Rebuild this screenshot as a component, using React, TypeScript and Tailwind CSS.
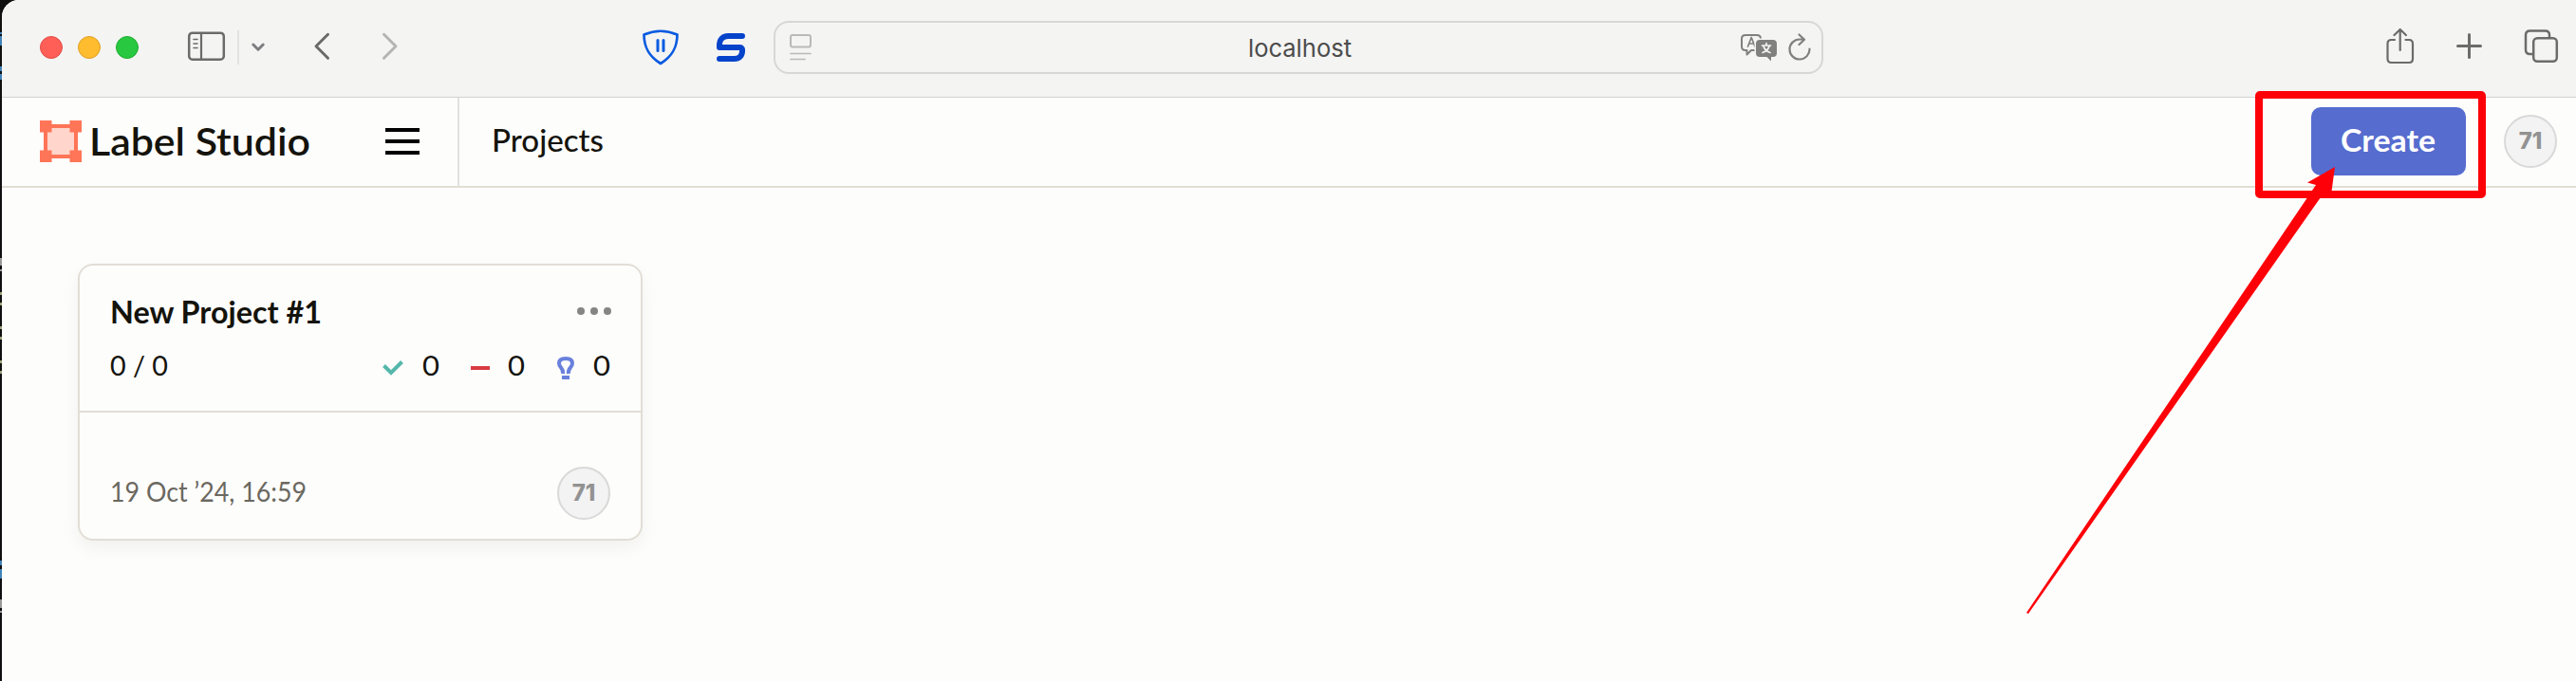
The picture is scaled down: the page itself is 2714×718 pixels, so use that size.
import React from 'react';

function Txt({ x, y, w, size, weight = 400, fill, family, children }: { x?: number; y: number; w: number; size: number; weight?: number; fill: string; family: string; children: string }) {
  return (
    <svg width={w} height={y + 14} className="block shrink-0 overflow-visible">
      <text x={x ?? 0} y={y} textLength={w} lengthAdjust="spacingAndGlyphs" fontSize={size} fontWeight={weight} fill={fill} fontFamily={family}>{children}</text>
    </svg>
  );
}

const LATO = 'Lato, sans-serif';
const INTER = 'Inter, sans-serif';

function Avatar() {
  return (
    <div className="flex h-14 w-14 shrink-0 items-center justify-center rounded-full border-2 border-[#d9d9d9] bg-[#f3f3f3] pb-[1px] font-['Inter'] text-[24px] leading-none font-extrabold text-[#929292]">
      71
    </div>
  );
}

function Toolbar() {
  return (
    <div className="flex h-[102px] shrink-0 bg-[#f4f4f3]">
      <div className="flex h-full w-[813px] shrink-0">
        <svg width="813" height="102" viewBox="2 0 813 102" fill="none" strokeLinecap="round" strokeLinejoin="round">
          <circle cx="54" cy="50" r="11.5" fill="#ff5f57" stroke="#e24b42" />
          <circle cx="94" cy="50" r="11.5" fill="#febc2e" stroke="#e0a028" />
          <circle cx="134" cy="50" r="11.5" fill="#28c840" stroke="#1fae30" />
          <rect x="199.2" y="34.7" width="36.6" height="28" rx="3.5" stroke="#6b6b6a" strokeWidth="2.5" />
          <path d="M212 35v28" stroke="#6b6b6a" strokeWidth="2.2" />
          <path d="M204 41.5h4M204 46h4M204 50.5h4" stroke="#6b6b6a" strokeWidth="1.6" />
          <path d="M251 32v36" stroke="#e2e2e1" strokeWidth="2" strokeLinecap="butt" />
          <path d="M266.800 47l5.200 5.200 5.200-5.200" stroke="#7d7d80" strokeWidth="3" />
          <path d="M345.500 36.300l-12.500 12.500 12.500 12.500" stroke="#6a6a6a" strokeWidth="3" />
          <path d="M404.500 36.300l12.500 12.500-12.500 12.500" stroke="#b4b4b4" strokeWidth="3" />
          <path d="M678.500 36.500q17.500-7.500 35 0c0 14-5.500 23-17.500 30.500c-12-7.500-17.500-16.500-17.500-30.500z" stroke="#0a5be0" strokeWidth="2.700" />
          <path d="M693 42.500v11M699 42.500v11" stroke="#0a5be0" strokeWidth="3" />
          <path d="M782 38h-15c-6 0-9 4.500-9 8.500v3.500h21.500q3 0 2.500 4c0 4.500-3 8-8.500 8h-15.500" stroke="#0543cb" strokeWidth="6" />
        </svg>
      </div>
      <div className="mt-[22px] flex h-14 w-[1106px] shrink-0 items-center justify-between rounded-2xl border-2 border-[#d7d7d5] pr-[11px] pl-[15px]">
        <svg width="24" height="28" fill="none" stroke="#b9b9b7" strokeWidth="2" strokeLinecap="round">
          <rect x="1" y="1" width="21" height="12.500" rx="2" />
          <path d="M1 20.500h21M1 26.500h15" strokeWidth="1.700" />
        </svg>
        <div className="ml-[50px] pt-[1px]">
          <Txt y={33} w={109} size={26} fill="#4c4c4c" family={INTER}>localhost</Txt>
        </div>
        <svg width="75" height="30" viewBox="1833 36 75 30" fill="none" stroke="#80807e" strokeWidth="2" strokeLinecap="round" strokeLinejoin="round">
          <path d="M1849 54h-4l-4.500 4.500v-4.500h-1.500q-4 0-4-4v-8q0-4 4-4h12q4 0 4 4v1" />
          <path d="M1841.500 50l3.700-9.500 3.700 9.500M1843 47h4.500" strokeWidth="1.700" />
          <path d="M1854 43h14q4 0 4 4v10q0 4-4 4h-2v4.500l-4.500-4.500h-7.500q-4 0-4-4v-10q0-4 4-4z" fill="#80807e" stroke="#f4f4f3" strokeWidth="3" paintOrder="stroke" />
          <path d="M1856.500 49h9M1861 46.500v2M1864 49.500q-1 5-7 7M1858 49.500q1 5 7 7" stroke="#f4f4f3" strokeWidth="1.700" />
          <path d="M1906.500 52.500a10.500 10.500 0 1 1-10.500-10h5M1895.500 37.500l5.500 5.200-5.500 5.300" strokeWidth="2.200" />
        </svg>
      </div>
      <svg className="ml-auto shrink-0" width="214" height="102" viewBox="2500 0 214 102" fill="none" stroke="#6b6b6a" strokeWidth="2.500" strokeLinecap="round" strokeLinejoin="round">
        <path d="M2523 42h-3.500q-4 0-4 4v16q0 4 4 4h18.500q4 0 4-4v-16q0-4-4-4h-3.500M2528.700 53v-21M2522.500 37l6.200-6 6.200 6" strokeWidth="2.200" />
        <path d="M2589.500 48.500h24M2601.500 36.500v24" strokeWidth="3" />
        <rect x="2669.200" y="40.200" width="24.600" height="24.600" rx="4" />
        <path d="M2668 57h-2.500q-4.500 0-4.500-4.500v-15.500q0-4.500 4.500-4.500h16q4.500 0 4.500 4.500v2" />
      </svg>
    </div>
  );
}

function Header() {
  return (
    <header className="flex h-24 shrink-0 items-center border-t border-b-2 border-t-[#d2d2d2] border-b-[#e1ded5] bg-[#fdfdfc]">
      <div className="flex h-full w-[482px] shrink-0 items-center border-r-2 border-[#e1e1e0] pb-[1px] pl-10">
        <svg width="44" height="44" className="shrink-0">
          <rect x="6" y="6" width="32" height="32" rx="2" fill="#ffd5cc" stroke="#ff7557" strokeWidth="4" />
          <path d="M0 0h12.500v12.500H0zM31.500 0H44v12.500H31.500zM0 31.500h12.500V44H0zM31.500 31.500H44V44H31.500z" fill="#ff7557" />
        </svg>
        <div className="ml-[8px] pt-[1px]">
          <Txt y={42} w={233} size={41} weight={600} fill="#14130c" family={LATO}>Label Studio</Txt>
        </div>
        <div className="ml-[79px] flex w-9 flex-col gap-2">
          <div className="h-1 bg-black" />
          <div className="h-1 bg-black" />
          <div className="h-1 bg-black" />
        </div>
      </div>
      <div className="ml-[34px]">
        <Txt y={34} w={118} size={32} weight={500} fill="#14130c" family={LATO}>Projects</Txt>
      </div>
      <div className="ml-auto flex items-center gap-10 pr-5 pb-[1px]">
        <div className="flex h-[72px] w-[163px] items-center justify-center rounded-[10px] bg-[#566ccf]">
          <Txt x={-1} y={35} w={100} size={32} weight={700} fill="#fff" family={LATO}>Create</Txt>
        </div>
        <Avatar />
      </div>
    </header>
  );
}

function ProjectCard() {
  return (
    <section className="mt-20 ml-20 flex h-[292px] w-[595px] flex-col rounded-2xl border-2 border-[#e1ded5] bg-[#fdfdfc] shadow-[0_8px_18px_rgba(0,0,0,0.05)]">
      <div className="flex h-[156px] flex-col border-b-2 border-[#e1ded5] pt-[31px] pr-[31px] pl-[31px]">
        <div className="flex items-start justify-between">
          <Txt x={1} y={30} w={223} size={31.500} weight={700} fill="#14130c" family={LATO}>New Project #1</Txt>
          <svg width="38" height="10" className="mt-[12px]" fill="#858584">
            <circle cx="6" cy="5" r="4" />
            <circle cx="20" cy="5" r="4" />
            <circle cx="34" cy="5" r="4" />
          </svg>
        </div>
        <div className="mt-[13px] flex items-start">
          <Txt x={1} y={28} w={61} size={28} fill="#14130c" family={LATO}>0 / 0</Txt>
          <svg width="24" height="28" viewBox="403 370 24 28" className="ml-[227px]"><path d="M404.500 387.500l7.500 7.500 11.500-11.500" fill="none" stroke="#55b7aa" strokeWidth="4" /></svg>
          <div className="ml-[19px]"><Txt x={-1} y={28} w={18} size={28} fill="#14130c" family={LATO}>0</Txt></div>
          <div className="mt-[18px] ml-[32px] h-1 w-5 bg-[#d93b40]" />
          <div className="ml-[19px]"><Txt y={28} w={18} size={28} fill="#14130c" family={LATO}>0</Txt></div>
          <svg width="20" height="34" viewBox="586 368 20 34" className="ml-[33px]"><path d="M593 394q.5-3.500-2-6.500-2-2.500-2-4.500 0-5 7-5t7 5q0 2-2 4.500-2.500 3-2 6.500" fill="none" stroke="#6980dc" strokeWidth="4" /><path d="M592 396h8v4h-8z" fill="#6980dc" /></svg>
          <div className="ml-[19px]"><Txt y={28} w={18} size={28} fill="#14130c" family={LATO}>0</Txt></div>
        </div>
      </div>
      <div className="flex h-[134px] items-end justify-between pr-[32px] pb-5 pl-[31px]">
        <div className="pb-[5px]"><Txt x={1} y={23} w={207} size={28} fill="#6b6860" family={LATO}>19 Oct ’24, 16:59</Txt></div>
        <Avatar />
      </div>
    </section>
  );
}

export default function App() {
  return (
    <div className="relative h-[718px] w-[2714px] overflow-hidden bg-[#101010] pl-[2px]">
      <div className="flex h-full flex-col overflow-hidden rounded-tl-[18px] bg-[#fdfdfc]">
        <Toolbar />
        <Header />
        <main className="flex-1"><ProjectCard /></main>
      </div>
      <svg className="absolute top-0 left-0" width="2714" height="718">
        <rect x="2380" y="100" width="235" height="105" rx="1" fill="none" stroke="#fe0008" strokeWidth="8" strokeLinejoin="round" />
        <path d="M2460 176L2431 192.500L2440 195L2135 646L2137 647L2445 208L2455.500 209z" fill="#fe0008" />
        <path d="M0 34h2v2H0zM0 38h2v10H0zM0 70h2v5H0zM0 78h2v6H0zM0 591h2v5H0zM0 600h2v10H0z" fill="#3f83b8" />
        <path d="M0 272h2v8H0zM0 284h2v2H0zM0 632h2v9H0zM0 644h2v2H0z" fill="#999" />
        <path d="M0 308h2v3H0zM0 319h2v3H0zM0 344h2v3H0zM0 355h2v3H0zM0 380h2v3H0zM0 391h2v3H0z" fill="#a0a078" />
      </svg>
    </div>
  );
}
